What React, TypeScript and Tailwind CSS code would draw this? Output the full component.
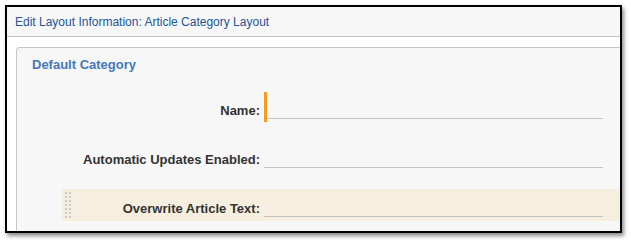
import { ReactNode } from 'react';

function DragHandle() {
  return (
    <svg width="8" height="27" viewBox="0 0 8 27" className="block">
      {[0, 1, 2, 3, 4, 5, 6].map((r) => (
        <g key={r}>
          <rect x="0" y={r * 4} width="2" height="2" fill="#cacaca" />
          <rect x="4" y={r * 4} width="2" height="2" fill="#cacaca" />
        </g>
      ))}
    </svg>
  );
}

function Row({ label, focused, highlight }: { label: string; focused?: boolean; highlight?: boolean }) {
  return (
    <div className={`ml-[45px] flex h-[32px] items-start ${highlight ? 'bg-[#f6efdf]' : ''}`}>
      <div className="w-[12px] pl-[3px] pt-[3px]">{highlight && <DragHandle />}</div>
      <label className="w-[186px] pt-[12px] text-right text-[13px] font-bold leading-[16px] text-[#333333]">
        {label}
      </label>
      <div className="ml-[4px] flex w-[339px] items-start">
        {focused && <div className="mt-[1px] h-[30px] w-[3px] bg-[#f39c1f]" />}
        <div className="h-[28px] flex-1 border-b border-[#c4c4c4]" />
      </div>
    </div>
  );
}

function Frame({ children }: { children: ReactNode }) {
  return (
    <div className="ml-[5px] mt-[5px] flex h-[228px] w-[617px] flex-col overflow-hidden border-2 border-black bg-white shadow-[2px_3px_4px_rgba(0,0,0,0.45)]">
      {children}
    </div>
  );
}

export default function App() {
  return (
    <div className="h-[243px] w-[631px] overflow-hidden bg-white" style={{ fontFamily: '"Liberation Sans", Arial, sans-serif' }}>
      <Frame>
        <div className="flex h-[30px] shrink-0 items-center border-b border-[#c6c6c6] bg-[#f7f7f7] pl-[8px] text-[12px] text-[#24549a]">
          Edit Layout Information: Article Category Layout
        </div>
        <div className="ml-[9px] mt-[10px] flex w-[640px] flex-1 flex-col rounded-tl-[4px] border-l border-t border-[#c6c6c6] bg-[#f7f7f7]">
          <h2 className="pl-[15px] pt-[9px] text-[13px] font-bold leading-[16px] text-[#4677b8]">Default Category</h2>
          <div className="mt-[18px] flex flex-col gap-[17px]">
            <Row label="Name:" focused />
            <Row label="Automatic Updates Enabled:" />
            <Row label="Overwrite Article Text:" highlight />
          </div>
        </div>
      </Frame>
    </div>
  );
}
